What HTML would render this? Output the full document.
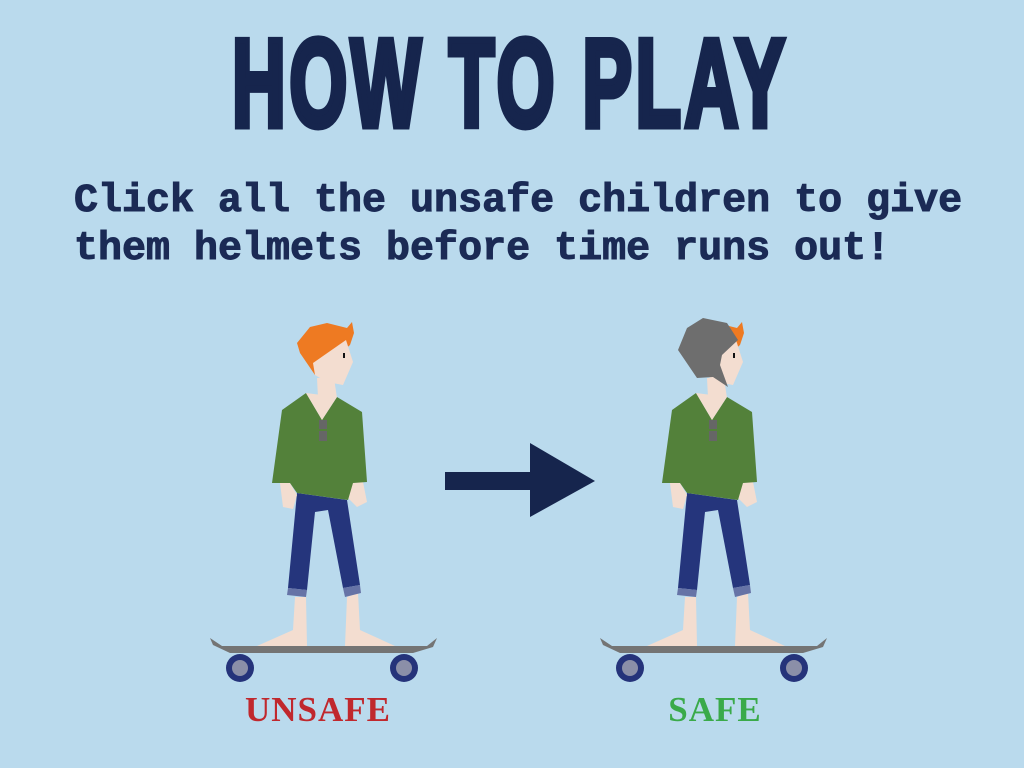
<!DOCTYPE html>
<html><head><meta charset="utf-8"><style>
html,body{margin:0;padding:0}
body{width:1024px;height:768px;background:#badaed;position:relative;overflow:hidden;font-family:"Liberation Sans",sans-serif}
.title{position:absolute;left:232px;top:22px;width:550px;height:120px;white-space:nowrap}
.title span{display:inline-block;font-family:"Liberation Sans",sans-serif;font-weight:bold;font-size:124px;line-height:124px;color:#16254d;transform-origin:0 0;transform:scaleX(0.6);letter-spacing:6px;-webkit-text-stroke:7px #16254d}
.sub{position:absolute;left:74px;top:178px;font-family:"Liberation Mono",monospace;font-weight:bold;font-size:40px;line-height:48px;color:#1b2a55;white-space:pre;-webkit-text-stroke:1px #1b2a55}
.lbl{position:absolute;top:690px;font-family:"Liberation Serif",serif;font-weight:bold;font-size:35px;line-height:40px;text-align:center;width:200px;letter-spacing:1px}
</style></head><body>
<div class="title"><span>HOW TO PLAY</span></div>
<div class="sub">Click all the unsafe children to give
them helmets before time runs out!</div>
<svg width="1024" height="768" style="position:absolute;left:0;top:0">
<defs>
<g id="kid">
<polygon points="210,638 222,646 427,646 437,638 433,647 413,653 230,653 213,645" fill="#747474"/>
<circle cx="240" cy="668" r="14" fill="#25337a"/><circle cx="240" cy="668" r="8" fill="#8b8fa8"/>
<circle cx="404" cy="668" r="14" fill="#25337a"/><circle cx="404" cy="668" r="8" fill="#8b8fa8"/>
<polygon points="295,597 306,597 307,646 257,646 293,630" fill="#f3ddd0"/>
<polygon points="347,597 358,593 360,630 395,646 345,646" fill="#f3ddd0"/>
<polygon points="297,493 347,500 360,585 343,588 328,510 315,512 307,590 288,588" fill="#25357c"/>
<polygon points="288,588 307,590 306,597 287,595" fill="#6673a6"/>
<polygon points="343,588 360,585 361,593 345,597" fill="#6673a6"/>
<polygon points="280,483 283,507 293,509 297,495 290,483" fill="#f3ddd0"/>
<polygon points="352,483 348,498 357,507 367,502 363,482" fill="#f3ddd0"/>
<polygon points="317,378 334,378 337,398 318,398" fill="#f3ddd0"/>
<polygon points="282,410 306,393 322,420 337,397 362,412 367,482 353,483 348,500 297,493 290,483 272,483" fill="#53813a"/>
<polygon points="306,393 322,420 337,397" fill="#f3ddd0"/>
<rect x="319" y="420" width="8" height="9" fill="#666"/>
<rect x="319" y="431" width="8" height="10" fill="#666"/>
<polygon points="297,343 310,327 327,323 347,328 352,322 354,333 350,345 315,375 300,353" fill="#ee7a22"/>
<polygon points="313,363 346,340 353,362 343,385 327,382 315,375" fill="#f3ddd0"/>
<rect x="343" y="353" width="2" height="5" fill="#111"/>
</g>
</defs>
<use href="#kid"/>
<use href="#kid" transform="translate(390,0)"/>
<polygon points="687,328 703,318 727,323 738,340 722,355 720,365 728,387 713,377 697,378 678,350" fill="#6e6e6e"/>
<rect x="445" y="472" width="87" height="18" fill="#16254d"/>
<polygon points="530,443 595,481 530,517" fill="#16254d"/>
</svg>
<div class="lbl" style="left:218px;color:#c0282d">UNSAFE</div>
<div class="lbl" style="left:615px;color:#3aaa4a">SAFE</div>
</body></html>
